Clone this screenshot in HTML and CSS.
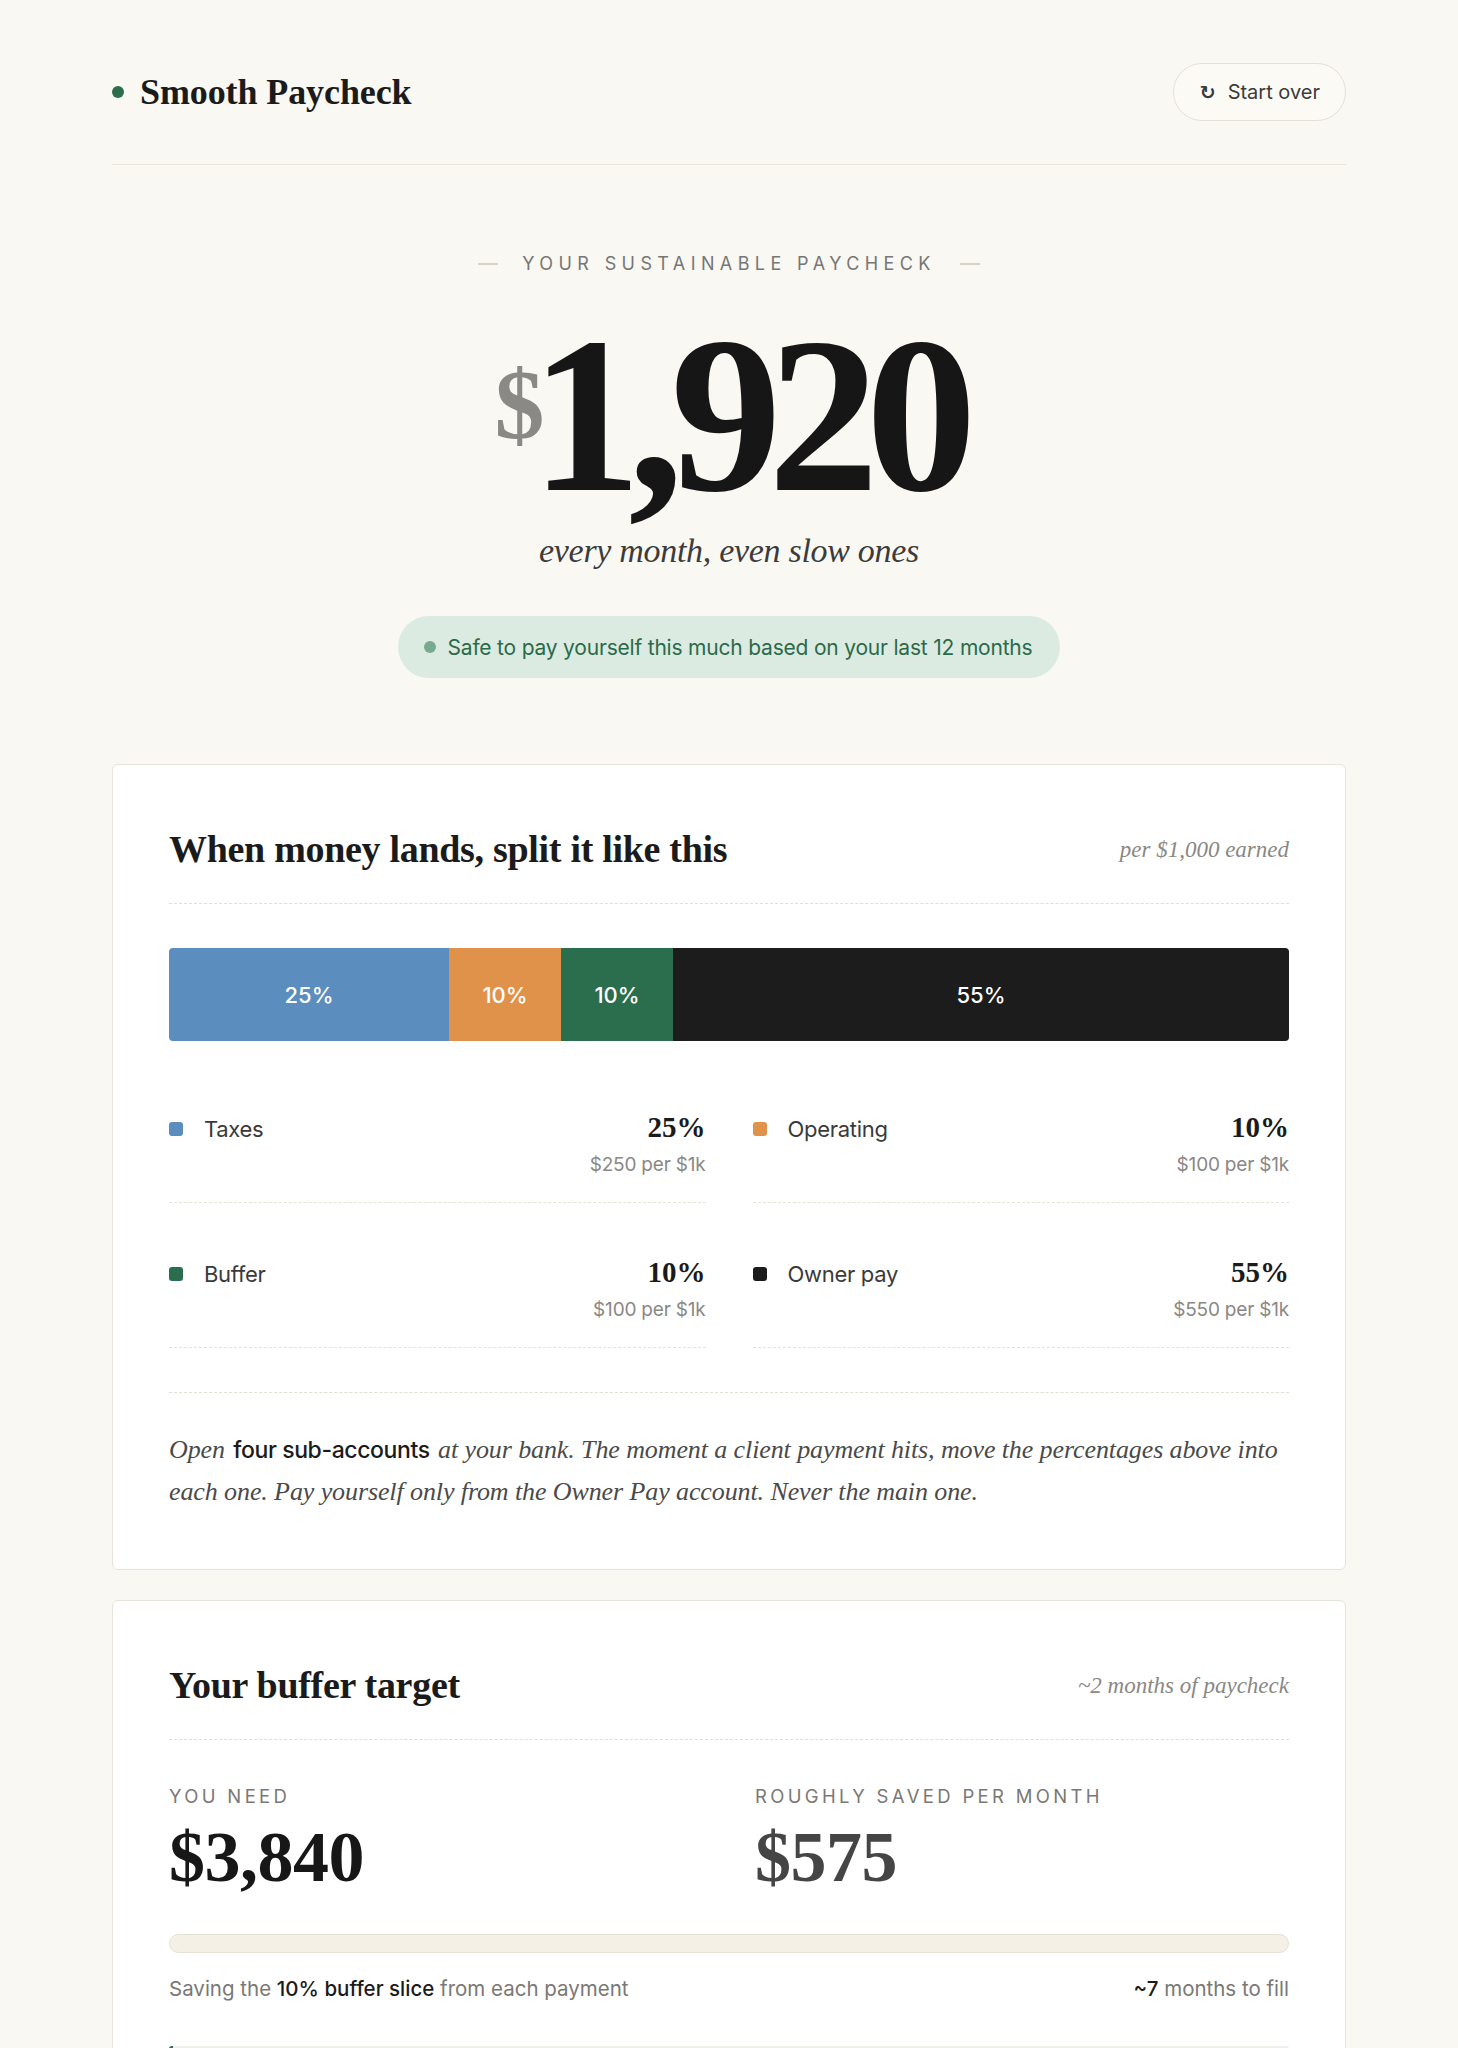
FILE: index.html
```html
<!DOCTYPE html>
<html lang="en">
<head>
    <meta charset="UTF-8" />
    <meta name="viewport" content="width=device-width, initial-scale=1.0" />
    <title>Smooth Paycheck</title>
    <link rel="stylesheet" href="styles.css">
</head>
<body>
<div class="page">
    <header class="topbar">
        <div class="brand"><span class="brand-dot"></span>Smooth Paycheck</div>
        <button class="restart"><span class="restart-icon">↻</span>Start over</button>
    </header>

    <section class="hero">
        <div class="eyebrow"><span class="rule"></span>Your sustainable paycheck<span class="rule"></span></div>
        <div class="amount"><span class="currency">$</span>1,920</div>
        <div class="tagline">every month, even slow ones</div>
        <div class="safe-pill"><span class="safe-dot"></span>Safe to pay yourself this much based on your last 12 months</div>
    </section>

    <section class="card">
        <div class="card-head">
            <h2>When money lands, split it like this</h2>
            <span class="card-note">per $1,000 earned</span>
        </div>

        <div class="split-bar">
            <div class="seg seg-taxes" style="width: 25%">25%</div>
            <div class="seg seg-operating" style="width: 10%">10%</div>
            <div class="seg seg-buffer" style="width: 10%">10%</div>
            <div class="seg seg-owner" style="width: 55%">55%</div>
        </div>

        <div class="legend">
            <div class="legend-row">
                <div class="legend-name"><span class="swatch seg-taxes"></span>Taxes</div>
                <div class="legend-vals">
                    <div class="pct">25%</div>
                    <div class="per">$250 per $1k</div>
                </div>
            </div>
            <div class="legend-row">
                <div class="legend-name"><span class="swatch seg-operating"></span>Operating</div>
                <div class="legend-vals">
                    <div class="pct">10%</div>
                    <div class="per">$100 per $1k</div>
                </div>
            </div>
            <div class="legend-row">
                <div class="legend-name"><span class="swatch seg-buffer"></span>Buffer</div>
                <div class="legend-vals">
                    <div class="pct">10%</div>
                    <div class="per">$100 per $1k</div>
                </div>
            </div>
            <div class="legend-row">
                <div class="legend-name"><span class="swatch seg-owner"></span>Owner pay</div>
                <div class="legend-vals">
                    <div class="pct">55%</div>
                    <div class="per">$550 per $1k</div>
                </div>
            </div>
        </div>

        <p class="howto">Open <strong>four sub-accounts</strong> at your bank. The moment a client payment hits, move the percentages above into each one. Pay yourself only from the Owner Pay account. Never the main one.</p>
    </section>

    <section class="card">
        <div class="card-head">
            <h2>Your buffer target</h2>
            <span class="card-note">~2 months of paycheck</span>
        </div>

        <div class="stats">
            <div>
                <div class="stat-label">You need</div>
                <div class="stat-value">$3,840</div>
            </div>
            <div>
                <div class="stat-label">Roughly saved per month</div>
                <div class="stat-value muted">$575</div>
            </div>
        </div>

        <div class="track"></div>
        <div class="track-caption">
            <span>Saving the <strong>10% buffer slice</strong> from each payment</span>
            <span><strong>~7</strong> months to fill</span>
        </div>

        <div class="months">
            <div class="months-fill" style="width: 0.4%"></div>
        </div>
    </section>
</div>
</body>
</html>
```

FILE: styles.css
```css
* {
    box-sizing: border-box;
}
body {
    margin: 0;
    background-color: #faf8f2;
    font-family: Inter, "Noto Sans", sans-serif;
    color: #1b1b1b;
}
.page {
    width: 1234px;
    margin: 0 auto;
    padding-bottom: 60px;
}
/* topo */
.topbar {
    display: flex;
    align-items: center;
    justify-content: space-between;
    padding: 63px 0 43px;
    border-bottom: 1px solid #e8e4da;
}
.brand {
    display: flex;
    align-items: center;
    gap: 16px;
    font-family: "Liberation Serif", serif;
    font-weight: bold;
    font-size: 36px;
    letter-spacing: -0.1px;
}
.brand-dot {
    width: 12px;
    height: 12px;
    border-radius: 50%;
    background-color: #2a6e4c;
}
.restart {
    display: flex;
    align-items: center;
    gap: 12px;
    height: 58px;
    padding: 0 25px 0 26px;
    border: 1.5px solid #e4e0d6;
    border-radius: 30px;
    background-color: #fbfaf5;
    font-family: Inter, sans-serif;
    font-size: 20px;
    color: #3a3a3a;
    cursor: pointer;
}
.restart-icon {
    font-family: "DejaVu Sans", sans-serif;
    font-size: 19px;
    font-weight: bold;
}
/* destaque */
.hero {
    display: flex;
    flex-direction: column;
    align-items: center;
    padding-top: 88px;
}
.eyebrow {
    display: flex;
    align-items: center;
    gap: 24px;
    font-size: 18px;
    letter-spacing: 0.3em;
    text-transform: uppercase;
    color: #767676;
    line-height: 22px;
}
.rule {
    width: 20px;
    height: 1.5px;
    background-color: #d6d2c6;
}
.amount {
    display: flex;
    align-items: flex-start;
    margin-top: 29px;
    font-family: "Liberation Serif", serif;
    font-weight: bold;
    font-size: 222px;
    line-height: 1;
    letter-spacing: -0.06em;
    color: #161616;
}
.currency {
    margin-top: 51px;
    font-size: 100px;
    letter-spacing: -14px;
    color: #8b8985;
}
.tagline {
    margin-top: 3px;
    font-family: "Liberation Serif", serif;
    font-style: italic;
    font-size: 34px;
    line-height: 43px;
    color: #3c3c3c;
    letter-spacing: -0.3px;
}
.safe-pill {
    display: flex;
    align-items: center;
    gap: 12px;
    height: 62px;
    margin-top: 44px;
    padding: 0 28px 0 26px;
    border-radius: 31px;
    background-color: #dcebe1;
    font-size: 21px;
    letter-spacing: -0.2px;
    color: #2a6a4a;
}
.safe-dot {
    width: 12px;
    height: 12px;
    border-radius: 50%;
    background-color: #79a98f;
}
/* cartoes */
.card {
    margin-top: 86px;
    padding: 64px 56px 56px;
    background-color: #ffffff;
    border: 1.5px solid #e8e4da;
    border-radius: 6px;
}
.card + .card {
    margin-top: 30px;
}
.card-head {
    display: flex;
    align-items: center;
    justify-content: space-between;
    padding-bottom: 33px;
    border-bottom: 1.5px dashed #e2ded4;
}
.card-head h2 {
    margin: 0;
    font-family: "Liberation Serif", serif;
    font-weight: bold;
    font-size: 38px;
    line-height: 41px;
    letter-spacing: -0.3px;
}
.card-note {
    font-family: "Liberation Serif", serif;
    font-style: italic;
    font-size: 23px;
    color: #8a8884;
}
.split-bar {
    display: flex;
    height: 93px;
    margin-top: 44px;
    border-radius: 4px;
    overflow: hidden;
}
.seg {
    display: flex;
    align-items: center;
    justify-content: center;
    color: #ffffff;
    font-size: 22px;
    font-weight: 500;
}
.seg-taxes {
    background-color: #5b8dbf;
}
.seg-operating {
    background-color: #e0924a;
}
.seg-buffer {
    background-color: #2b6e4d;
}
.seg-owner {
    background-color: #1c1c1c;
}
.legend {
    display: grid;
    grid-template-columns: 1fr 1fr;
    column-gap: 47px;
    margin-top: 17px;
}
.legend-row {
    display: flex;
    justify-content: space-between;
    align-items: flex-start;
    padding: 52px 0 25px;
    border-bottom: 1.5px dashed #e6e2d8;
}
.legend-name {
    display: flex;
    align-items: center;
    gap: 21px;
    font-size: 22px;
    line-height: 38px;
    color: #3a3a3a;
    letter-spacing: -0.3px;
}
.swatch {
    width: 14px;
    height: 14px;
    border-radius: 3px;
}
.legend-vals {
    text-align: right;
}
.pct {
    font-family: "Liberation Serif", serif;
    font-weight: bold;
    font-size: 29px;
    line-height: 34px;
}
.per {
    margin-top: 8px;
    font-size: 19px;
    line-height: 25px;
    color: #8a8884;
    letter-spacing: -0.2px;
}
.howto {
    margin: 44px 0 0;
    padding-top: 36px;
    border-top: 1.5px dashed #e2ded4;
    font-family: "Liberation Serif", serif;
    font-style: italic;
    font-size: 26px;
    line-height: 42px;
    color: #4a4a4a;
    letter-spacing: -0.1px;
}
.howto strong {
    margin: 0 2px;
    font-family: Inter, sans-serif;
    font-style: normal;
    font-weight: 500;
    font-size: 23px;
    color: #1b1b1b;
    letter-spacing: -0.4px;
}
/* reserva */
.stats {
    display: grid;
    grid-template-columns: 1fr 1fr;
    column-gap: 52px;
    margin-top: 45px;
}
.stat-label {
    font-size: 18.5px;
    line-height: 23px;
    letter-spacing: 0.18em;
    text-transform: uppercase;
    color: #7a7874;
}
.stat-value {
    margin-top: 10px;
    font-family: "Liberation Serif", serif;
    font-weight: bold;
    font-size: 72px;
    line-height: 79px;
    letter-spacing: -0.5px;
    color: #171717;
}
.stat-value.muted {
    color: #454545;
}
.track {
    height: 19px;
    margin-top: 37px;
    border: 1.5px solid #e6e1d5;
    border-radius: 10px;
    background-color: #f4f0e6;
}
.track-caption {
    display: flex;
    justify-content: space-between;
    margin-top: 22px;
    font-size: 20.5px;
    line-height: 28px;
    color: #7a7874;
    letter-spacing: 0;
}
.track-caption strong {
    font-weight: 500;
    color: #1b1b1b;
}
.months {
    height: 20px;
    margin-top: 43px;
    border-radius: 3px;
    background-color: #f1efe9;
    overflow: hidden;
}
.months-fill {
    height: 100%;
    min-width: 4px;
    background-color: #2b6e4d;
}
```
